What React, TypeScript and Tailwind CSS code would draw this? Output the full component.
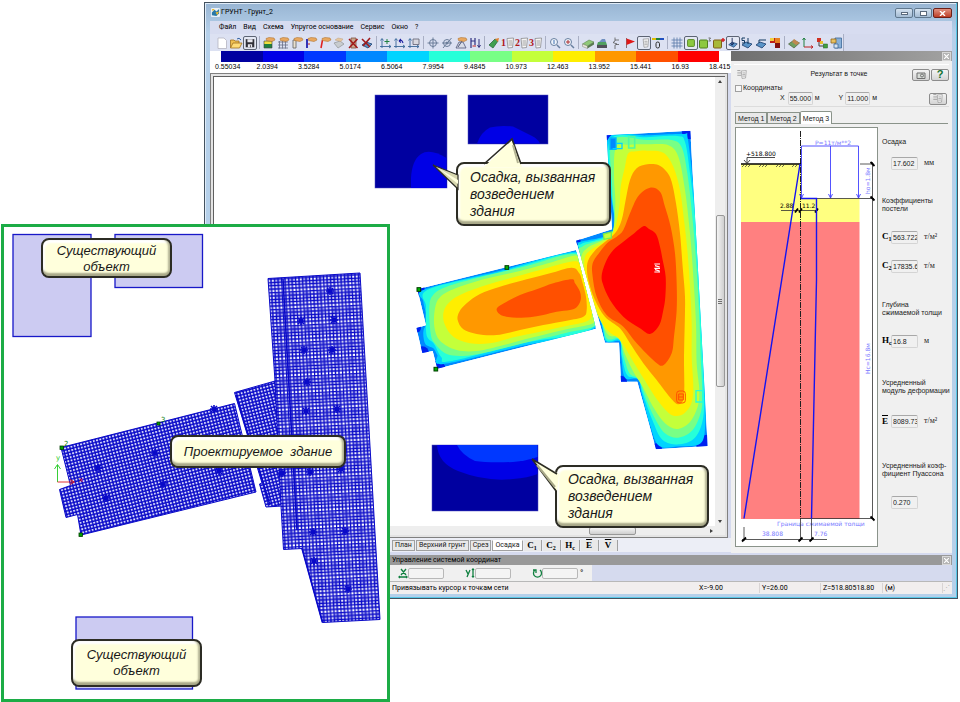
import React from 'react';
import clsx from 'clsx';

type Point = [number, number];

const parse = (src: string): Point[] =>
  src.trim().split(/\s+/).map((pair) => pair.split(',').map(Number) as Point);

// closed Catmull-Rom curve through the given points
const smooth = (src: string) => {
  const p = parse(src);
  const n = p.length;
  let d = `M${p[0][0]} ${p[0][1]}`;
  for (let i = 0; i < n; i++) {
    const a = p[(i + n - 1) % n];
    const b = p[i];
    const c = p[(i + 1) % n];
    const e = p[(i + 2) % n];
    d += `C${b[0] + (c[0] - a[0]) / 6} ${b[1] + (c[1] - a[1]) / 6} ${c[0] - (e[0] - b[0]) / 6} ${c[1] - (e[1] - b[1]) / 6} ${c[0]} ${c[1]}`;
  }
  return d + 'Z';
};

const SCALE = [
  { value: '0.55034', bar: 'bg-[#0000a0]' },
  { value: '2.0394', bar: 'bg-[#0000e6]' },
  { value: '3.5284', bar: 'bg-[#0038ff]' },
  { value: '5.0174', bar: 'bg-[#0088ff]' },
  { value: '6.5064', bar: 'bg-[#00d4ff]' },
  { value: '7.9954', bar: 'bg-[#26ffd9]' },
  { value: '9.4845', bar: 'bg-[#78ff86]' },
  { value: '10.973', bar: 'bg-[#c4ff3a]' },
  { value: '12.463', bar: 'bg-[#ffee00]' },
  { value: '13.952', bar: 'bg-[#ff9800]' },
  { value: '15.441', bar: 'bg-[#ff5000]' },
  { value: '16.93', bar: 'bg-[#ff0000]' },
];

const MENU = ['Файл', 'Вид', 'Схема', 'Упругое основание', 'Сервис', 'Окно', '?'];

/* ---------- toolbar ---------- */

const Hand = () => (
  <path d="M4 2.5 7 1.5 12 2 13 4 10 5.5 7 5 4.5 4.5Z" fill="#e8a860" stroke="#a86820" strokeWidth=".5" />
);
const Axes = () => (
  <path d="M3 3V12M1 10.5H12M1.5 4.5 3 2.5 4.5 4.5M10 9 12 10.5 10 12" fill="none" stroke="#386898" strokeWidth=".9" />
);
const Sheet = () => (
  <g fill="#f4f4f4" stroke="#808080" strokeWidth=".7">
    <path d="M6 2.5 12.5 2 11.5 11.5 7 12Z" />
    <path d="M7.500 5H11M7.500 7H11M7.500 9H11" />
  </g>
);
const Plate = () => (
  <path d="M2 9 6 6 12 8 8 12Z" fill="#5a94c8" stroke="#1c3c6c" strokeWidth=".8" />
);

const ICONS: Record<string, React.ReactNode> = {
  new: <path d="M3 2H9L11.5 4.500V12.500H3Z" fill="#fff" stroke="#b4b4c0" strokeWidth=".8" />,
  open: (
    <>
      <path d="M1.500 12V4H5L6 5H10V7" fill="#f0c050" stroke="#a07020" strokeWidth=".8" />
      <path d="M1.500 12 4 7H13L10.500 12Z" fill="#ffdc78" stroke="#a07020" strokeWidth=".8" />
      <path d="M8 3Q10 1 12 4" fill="none" stroke="#3060a0" />
    </>
  ),
  save: (
    <>
      <path d="M2 2.500H12V12H2Z" fill="#303038" />
      <path d="M4 2.500H10V6H4ZM4.500 8.500H9.500V12H4.500Z" fill="#e8e8f0" />
      <path d="M7.500 9.500V12" stroke="#303038" />
    </>
  ),
  layers: (
    <>
      <path d="M2 5H10V8H2Z" fill="#f0e040" />
      <path d="M2 8H10V12H2Z" fill="#208040" />
      <path d="M2 5H10V12H2Z" fill="none" stroke="#404040" strokeWidth=".6" />
      <Hand />
    </>
  ),
  gridHand: (
    <>
      <path d="M2 6H12M2 9H12M3.500 5V12.500M6.500 5V12.500M9.500 5V12.500M2 12H12" stroke="#686e88" strokeWidth=".8" />
      <Hand />
    </>
  ),
  pile: (
    <>
      <path d="M3 4H6V12H3Z" fill="#e8e0d0" stroke="#606060" strokeWidth=".8" />
      <Hand />
    </>
  ),
  bore: (
    <>
      <path d="M3 3V12" stroke="#2020b0" strokeWidth="1.800" />
      <path d="M5 7V9" stroke="#c02020" />
      <Hand />
    </>
  ),
  line: (
    <>
      <path d="M3 12 4.500 4" stroke="#e02020" strokeWidth="1.600" />
      <Hand />
    </>
  ),
  slab: (
    <>
      <path d="M2 7 8 5 12 8 6 12Z" fill="#c8ccd0" stroke="#989ca0" strokeWidth=".8" />
      <path d="M3 4 6 2 11 3 9 5.500Z" fill="#e4c8a0" stroke="#c0a080" strokeWidth=".5" />
    </>
  ),
  delSheet: (
    <>
      <path d="M5 2H10V12H5Z" fill="#c8a890" stroke="#805040" strokeWidth=".8" />
      <path d="M3 3 11.500 12M11.500 3 3 12" stroke="#a01818" strokeWidth="1.500" />
    </>
  ),
  delPlate: (
    <>
      <Plate />
      <path d="M2 3 10 11M10 2 3 10" stroke="#a01818" strokeWidth="1.600" />
    </>
  ),
  axMove: (
    <>
      <Axes />
      <path d="M8 3V8M5.500 5.500H10.500" stroke="#208040" />
    </>
  ),
  axTurn: (
    <>
      <Axes />
      <path d="M6 5Q9 3 10 7M6 5 8 3M6 5 8 6.500" fill="none" stroke="#2020a0" strokeWidth="1.100" />
    </>
  ),
  axSave: (
    <>
      <Axes />
      <path d="M6 3H12V8.500H6Z" fill="#d8d8e0" stroke="#606070" strokeWidth=".8" />
    </>
  ),
  target: (
    <g fill="none" stroke="#6a7c98">
      <circle cx="7" cy="7" r="3.500" />
      <path d="M7 1.500V12.500M1.500 7H12.500" />
    </g>
  ),
  targetOff: (
    <g fill="none" stroke="#6a7c98">
      <circle cx="7" cy="7" r="3.500" />
      <path d="M2 7H12M3 12 11.500 2" />
      <circle cx="7" cy="7" r="1" fill="#6a7c98" />
    </g>
  ),
  measure: (
    <>
      <path d="M2 12 5 6 9 6 12 12Z" fill="#d8dce8" stroke="#505878" strokeWidth=".8" />
      <path d="M4 11 8 5" stroke="#505878" />
      <Hand />
    </>
  ),
  loads: (
    <>
      <path d="M3 2V12M3 5H7M7 2V9" stroke="#303080" strokeWidth="1.200" />
      <path d="M11 3V11M9.500 9 11 11.500 12.500 9" fill="none" stroke="#303080" />
      <path d="M4.500 10H8" stroke="#c02020" />
    </>
  ),
  calc: (
    <>
      <path d="M2 9 8 3 11 5 6 12Z" fill="#40a050" stroke="#206030" strokeWidth=".7" />
      <path d="M8 3 12 2 11 6Z" fill="#e08030" />
    </>
  ),
  zoom: (
    <g fill="none" stroke="#6880a0">
      <circle cx="6" cy="6" r="3.500" fill="#eef4fb" />
      <path d="M9 9 12 12" strokeWidth="1.500" />
      <path d="M6 4V8" stroke="#4070b0" />
    </g>
  ),
  zoomAll: (
    <g fill="none" stroke="#6880a0">
      <circle cx="6" cy="6" r="3.500" fill="#eef4fb" />
      <path d="M9 9 12 12" strokeWidth="1.500" />
      <path d="M4 6H8M6 4V8" stroke="#b03030" />
    </g>
  ),
  block: (
    <>
      <path d="M1.500 8 8 4 13 6 6.500 10Z" fill="#90c878" stroke="#507840" strokeWidth=".5" />
      <path d="M1.500 8 6.500 10V12.500L1.500 10.500Z" fill="#e8e8d8" stroke="#808070" strokeWidth=".5" />
      <path d="M6.500 10 13 6V8.500L6.500 12.500Z" fill="#587850" />
    </>
  ),
  strata: (
    <>
      <path d="M4 6 7 3 10 3 11 6Z" fill="#7090c0" />
      <path d="M3 6H11L12 9H2Z" fill="#50a060" />
      <path d="M2 9H12V12H2Z" fill="#505058" />
    </>
  ),
  level: <path d="M6 1.500V5L4 6.500 8 8 6 9V13M6 4H10M7 8.500H10" fill="none" stroke="#585858" strokeWidth=".8" />,
  flag: (
    <>
      <path d="M3.500 2V12" stroke="#705050" strokeWidth=".8" />
      <path d="M3.500 2.500 12 5.500 3.500 9Z" fill="#e01818" />
    </>
  ),
  report: <Sheet />,
  depth: (
    <>
      <path d="M1 3H5" stroke="#e0c000" strokeWidth="2" />
      <path d="M5 3H9" stroke="#208040" strokeWidth="2" />
      <path d="M9 3H13" stroke="#2050c0" strokeWidth="2" />
      <rect x="5" y="6" width="3.500" height="6" rx="1.700" fill="none" stroke="#303030" />
    </>
  ),
  grid: <path d="M1.500 4H12.500M1.500 7H12.500M1.500 10H12.500M4 1.500V12.500M7 1.500V12.500M10 1.500V12.500" stroke="#5878a8" strokeWidth=".8" />,
  green: <rect x="3" y="3" width="8" height="8" rx="1" fill="#8cc840" stroke="#50801c" />,
  green3: (
    <>
      <rect x="1.500" y="4" width="8" height="8" rx="1" fill="#8cc840" stroke="#50801c" />
      <path d="M10.500 2H12.500L11.500 3.500 12.500 5H10.500" fill="none" stroke="#404040" strokeWidth=".7" />
    </>
  ),
  greenMark: (
    <>
      <rect x="1.500" y="4" width="8" height="8" rx="1" fill="#a8b838" stroke="#806018" />
      <path d="M9 4H13M11 2V6" stroke="#d02020" strokeWidth="1.400" />
    </>
  ),
  plateDown: (
    <>
      <Plate />
      <path d="M6 1V9M4 7 6 9.500 8 7" fill="none" stroke="#102050" />
    </>
  ),
  plateSum: (
    <>
      <Plate />
      <path d="M5 2H2V4.500H4.500V7H2M8 2V8" fill="none" stroke="#103860" />
    </>
  ),
  plateFlat: (
    <>
      <Plate />
      <path d="M5 4H12M5 4V7" stroke="#103860" />
    </>
  ),
  palette: (
    <>
      <rect x="2" y="2" width="5" height="5" fill="#c02018" />
      <rect x="7" y="2" width="5" height="5" fill="#e88020" />
      <rect x="7" y="7" width="5" height="5" fill="#801010" />
      <rect x="2" y="2" width="4" height="3" fill="#f0d040" />
    </>
  ),
  iso: (
    <>
      <path d="M1.500 8 7 4 12.500 7 7 12Z" fill="#70a060" stroke="#405030" strokeWidth=".6" />
      <path d="M5 6 7 3 12.500 7 9 9Z" fill="#c08850" />
    </>
  ),
  axes: (
    <>
      <path d="M3 2V11M1.500 4 3 2 4.500 4" fill="none" stroke="#208040" />
      <path d="M3 11H12M10 9.500 12 11 10 12.500" fill="none" stroke="#c02020" />
    </>
  ),
  nodes: (
    <>
      <rect x="2" y="2" width="4" height="4" fill="#d03020" />
      <path d="M4 6V10H9" fill="none" stroke="#404040" />
      <rect x="5" y="5" width="3" height="3" fill="#e8c030" />
      <rect x="8.500" y="8" width="4" height="4" fill="#40a040" stroke="#206020" strokeWidth=".5" />
    </>
  ),
  windows: (
    <>
      <path d="M6 2H12.500V12H6Z" fill="#88b0d8" stroke="#3c6898" strokeWidth=".8" />
      <path d="M2 3H7V7H2Z" fill="#e8c060" stroke="#906820" strokeWidth=".8" />
      <path d="M5 8H9V12H5Z" fill="#d8e4f0" stroke="#3c6898" strokeWidth=".8" />
    </>
  ),
};

type Tool = { icon: string; title: string; on?: boolean; num?: string };

const TOOLS: (Tool | null)[] = [
  { icon: 'new', title: 'Создать' },
  { icon: 'open', title: 'Открыть' },
  { icon: 'save', title: 'Сохранить', on: true },
  null,
  { icon: 'layers', title: 'Слои грунта' },
  { icon: 'gridHand', title: 'Сетка' },
  { icon: 'pile', title: 'Свая' },
  { icon: 'bore', title: 'Скважина' },
  { icon: 'line', title: 'Линия' },
  { icon: 'slab', title: 'Плита' },
  { icon: 'delSheet', title: 'Удалить слой' },
  { icon: 'delPlate', title: 'Удалить плиту' },
  null,
  { icon: 'axMove', title: 'Перенос осей' },
  { icon: 'axTurn', title: 'Поворот осей' },
  { icon: 'axSave', title: 'Сохранить оси' },
  null,
  { icon: 'target', title: 'Привязка' },
  { icon: 'targetOff', title: 'Без привязки' },
  { icon: 'measure', title: 'Измерить' },
  { icon: 'loads', title: 'Нагрузки' },
  null,
  { icon: 'calc', title: 'Расчёт' },
  { icon: 'report', title: 'Вариант 1', num: '1' },
  { icon: 'report', title: 'Вариант 2', num: '2' },
  { icon: 'report', title: 'Вариант 3', num: '3' },
  null,
  { icon: 'zoom', title: 'Лупа' },
  { icon: 'zoomAll', title: 'Показать всё' },
  null,
  { icon: 'block', title: 'Объём' },
  { icon: 'strata', title: 'Разрез' },
  { icon: 'level', title: 'Отметка' },
  { icon: 'flag', title: 'Флаг' },
  { icon: 'report', title: 'Результат в точке', on: true },
  { icon: 'depth', title: 'Глубина' },
  null,
  { icon: 'grid', title: 'Сетка на плане' },
  { icon: 'green', title: 'Площадки', on: true },
  { icon: 'green3', title: 'Номера площадок' },
  { icon: 'greenMark', title: 'Метки' },
  { icon: 'plateDown', title: 'Осадка плиты', on: true },
  { icon: 'plateSum', title: 'Сумма' },
  { icon: 'plateFlat', title: 'Плоскость' },
  { icon: 'palette', title: 'Палитра' },
  null,
  { icon: 'iso', title: 'Изометрия' },
  { icon: 'axes', title: 'Оси' },
  { icon: 'nodes', title: 'Узлы' },
  { icon: 'windows', title: 'Окна' },
];

const Toolbar = () => (
  <div className="flex h-[17px] w-fit items-center border-r border-[#a9afc4] bg-[#dce1f2] pl-[5px]">
    {TOOLS.map((tool, i) =>
      tool === null ? (
        <span key={i} className="mx-[2px] h-[13px] w-px bg-[#a9afc4]" />
      ) : (
        <button
          key={i}
          type="button"
          aria-label={tool.title}
          className={clsx(
            'relative flex h-[14px] w-[14px] shrink-0 items-center justify-center',
            tool.on && 'rounded-[2px] border border-[#5c6474] bg-[#e4e8f4]'
          )}
        >
          <svg viewBox="0 0 14 14" className={tool.on ? 'h-[12px] w-[12px] shrink-0' : 'h-[14px] w-[14px] shrink-0'}>
            {ICONS[tool.icon]}
          </svg>
          {tool.num && (
            <span className="absolute top-[2px] left-0 font-['Liberation_Serif',serif] text-[10px] leading-[10px] font-bold text-[#b01818]">
              {tool.num}
            </span>
          )}
        </button>
      )
    )}
  </div>
);

/* ---------- settlement map ---------- */

const TOWER_OUTLINE = '110,76 361,62 413,1008 258,1018 202,815 153,815 147,698 105,698 88,635 18,392 126,358';
const TOWER: [string, string][] = [
  ['#00d4ff', '116,84 230,76 340,72 353,84 370,230 386,420 398,620 405,820 406,940 392,1000 330,1009 268,1008 240,945 215,850 204,808 165,803 154,740 149,694 108,694 92,630 26,410 30,396 128,362 122,240'],
  ['#26ffd9', '122,88 230,82 322,78 345,96 360,190 376,330 388,500 395,660 401,820 400,920 376,982 330,1003 278,990 247,930 218,850 206,808 172,796 156,740 149,690 110,692 92,630 28,420 34,402 128,364 124,240'],
  ['#78ff86', '128,92 230,90 305,90 335,112 352,190 368,330 380,480 388,620 392,740 397,850 393,905 368,960 325,983 285,970 252,920 226,860 206,808 178,790 160,735 149,686 112,686 94,630 32,440 40,408 128,366 127,240'],
  ['#c4ff3a', '138,112 180,104 240,103 295,106 325,140 345,240 360,370 370,500 378,640 380,760 388,840 383,890 358,938 320,957 285,940 252,895 218,830 190,785 166,735 146,684 116,676 96,640 72,590 40,490 34,440 55,412 100,390 128,366 136,280 132,200'],
  ['#ffee00', '175,130 200,124 230,122 280,128 310,170 330,240 342,330 352,420 360,530 365,640 365,740 370,830 364,880 345,908 320,918 295,908 262,870 225,812 190,755 150,690 120,668 100,645 75,590 47,500 44,445 62,420 100,397 132,362 148,290 152,230 165,170'],
  ['#ff9800', '232,163 265,165 290,185 305,215 318,280 330,370 338,470 345,560 344,650 342,740 343,830 340,870 325,883 305,868 260,810 220,760 180,700 150,655 105,620 75,570 55,510 52,460 72,425 100,400 135,370 155,330 167,270 180,210 200,175'],
  ['#ff5000', '240,233 270,245 285,290 302,350 315,430 320,520 320,600 312,680 305,730 280,766 255,755 200,700 160,650 110,615 80,560 68,500 68,460 90,425 115,396 140,380 160,360 180,310 205,258'],
  ['#ff0000', '220,349 236,356 258,372 270,410 278,450 287,500 286,560 280,600 268,645 240,672 210,655 160,620 120,570 98,520 96,490 110,450 130,420 160,395 190,372'],
];

const WING_OUTLINE = '52,208 528,90 588,326 112,446 98,393 67,399 49,324 78,316';
const WING: [string, string][] = [
  ['#00d4ff', '75,208 300,152 527,95 549,160 588,320 360,379 130,432 112,405 100,385 76,372 70,335 82,300 70,245'],
  ['#26ffd9', '86,208 300,156 527,98 552,160 588,316 360,372 150,424 124,412 102,372 84,355 78,330 78,260'],
  ['#78ff86', '140,200 240,172 380,138 525,102 553,160 584,250 587,314 500,338 400,362 280,392 200,407 140,402 104,370 92,340 88,260 100,224'],
  ['#c4ff3a', '522,107 545,120 560,160 578,240 584,295 574,312 500,328 400,352 300,378 230,393 170,390 120,362 103,320 105,265 120,232 160,208 250,178 350,155 450,128'],
  ['#ffee00', '520,124 543,140 555,180 568,230 576,280 562,303 500,318 420,335 340,352 270,370 210,370 160,350 135,315 130,280 145,250 180,225 250,198 330,175 420,150'],
  ['#ff9800', '515,143 538,160 548,190 558,230 560,270 550,290 500,302 430,315 360,330 290,345 230,342 190,328 173,300 178,275 200,250 240,222 300,200 380,178 450,160'],
  ['#ff5000', '515,178 525,190 540,215 542,240 530,262 510,270 470,275 430,285 390,292 350,293 310,288 292,275 293,262 320,245 360,225 410,208 460,190'],
];

const SettlementMap = () => (
  <svg className="h-[449px] min-w-0 flex-1" role="img" aria-label="Изополя осадки">
    <defs>
      <clipPath id="tower-clip"><polygon points={TOWER_OUTLINE} /></clipPath>
      <clipPath id="wing-clip"><polygon points={WING_OUTLINE} /></clipPath>
    </defs>
    <g transform="translate(-214 -77)">
      <g stroke="#5050c0" strokeWidth=".5" fill="#0000a0">
        <rect x="375" y="95" width="72" height="93" />
        <rect x="468" y="95" width="80" height="49" />
        <rect x="432" y="445" width="106" height="66" />
      </g>
      <path d="M411 188V178Q412 160 421 154Q430 148 446.500 158V188Z" fill="#0000e6" />
      <path d="M477 143.500Q481 132 490 127.500Q500 125 513 126.500Q524 132 532 136Q538 139 540 143.500Z" fill="#0000e6" />
      <path d="M437 445Q438 463 458 471Q486 482 513 479Q528 478 537.500 474V445Z" fill="#0000e6" />
      <path d="M457 445Q462 455 475 461Q488 463 513 462Q526 461 537.500 457V445Z" fill="#0038ff" />

      <g transform="translate(570 110) scale(.33333)">
        <g clipPath="url(#tower-clip)">
          <polygon points={TOWER_OUTLINE} fill="#0088ff" />
          <g fill="#0020f0">
            <circle cx="361" cy="62" r="26" />
            <circle cx="413" cy="1008" r="34" />
            <circle cx="258" cy="1018" r="18" />
            <circle cx="153" cy="815" r="18" />
            <circle cx="18" cy="392" r="14" />
            <circle cx="110" cy="76" r="14" />
          </g>
          {TOWER.map(([fill, pts]) => <path key={fill} d={smooth(pts)} fill={fill} />)}
          <path d="M120 84H138V118H120Z" fill="#0088ff" stroke="#00b4ff" strokeWidth="4" />
          <path d="M138 100H156V116H128" fill="none" stroke="#00d4ff" strokeWidth="4" />
          <path d="M176 80H194V114H176Z" fill="none" stroke="#50f8a0" strokeWidth="5" />
          <path d="M100 372 124 366V384L102 388Z" fill="#c4ff3a" stroke="#78e850" strokeWidth="4" />
          <path d="M378 842H398V876H378Z" fill="none" stroke="#26ffd9" strokeWidth="4" />
          <rect x="320" y="843" width="26" height="36" rx="8" fill="none" stroke="#ff5000" strokeWidth="3" />
          <path d="M326 852H340V870H326ZM326 861H340" fill="none" stroke="#ff5000" strokeWidth="3" />
        </g>
        <path d="M253 462H270M255 467 269 471M253 475H270M255 479 269 483M253 486H270" stroke="#fff" strokeWidth="3.500" />
      </g>

      <g transform="translate(400 220) scale(.33333)">
        <g clipPath="url(#wing-clip)">
          <polygon points={WING_OUTLINE} fill="#0088ff" />
          <g fill="#0020f0">
            <circle cx="52" cy="208" r="22" />
            <circle cx="112" cy="446" r="24" />
            <circle cx="67" cy="399" r="20" />
            <circle cx="49" cy="324" r="14" />
          </g>
          {WING.map(([fill, pts]) => <path key={fill} d={smooth(pts)} fill={fill} />)}
        </g>
        <g fill="#00b400" stroke="#003c00" strokeWidth="3">
          <rect x="51" y="203" width="11" height="11" />
          <rect x="315" y="137" width="11" height="11" />
          <rect x="102" y="442" width="11" height="11" />
        </g>
      </g>
    </g>
  </svg>
);

const SHEETS = ['План', 'Верхний грунт', 'Срез', 'Осадка'];

const Coef = ({ letter, sub, over }: { letter: string; sub?: string; over?: boolean }) => (
  <span className="font-['Liberation_Serif',serif] text-[9px] leading-[9px] font-bold text-black">
    <span className={over ? 'overline' : ''}>{letter}</span>
    {sub && <span className="relative top-[2px] text-[6px]">{sub}</span>}
  </span>
);

const SheetTabs = () => (
  <div role="tablist" className="flex h-[14px] items-start gap-px bg-[#eceef6] pt-[2px] pl-[182px] text-[7px]">
    {SHEETS.map((name) => (
      <button
        key={name}
        type="button"
        role="tab"
        className={clsx(
          'h-[11px] border border-[#a0a0a0] px-[2px] leading-[9px] whitespace-nowrap',
          name === 'Осадка' ? 'border-t-white bg-white' : 'bg-[#e9e9e9]'
        )}
      >
        {name}
      </button>
    ))}
    {[['C', '1'], ['C', '2'], ['H', 'c'], ['E', ''], ['V', '']].map(([letter, sub]) => (
      <button
        key={letter + sub}
        type="button"
        role="tab"
        className="flex h-[11px] w-[18px] items-center justify-center border-r border-[#a0a0a0] bg-[#e9e9e9]"
      >
        <Coef letter={letter} sub={sub} over={!sub} />
      </button>
    ))}
  </div>
);

/* ---------- result panel ---------- */

const Arrow = ({ x }: { x: number }) => <path d={`M${x} 146V198M${x - 2} 194 ${x} 198 ${x + 2} 194`} />;

const Section = () => (
  <svg className="h-[420px] w-[143px] shrink-0 border border-[#8a938a] bg-white" role="img" aria-label="Эпюра напряжений">
    <g transform="translate(-736 -128)" className="font-['DejaVu_Sans',sans-serif] text-[6px]">
      <path d="M741 164H801V198.500H859.500V222H741Z" fill="#ffff80" />
      <rect x="741" y="222" width="118.500" height="297" fill="#ff8080" />
      <path d="M800.500 131V519" stroke="#202020" strokeDasharray="6 1 1 1" />
      <path d="M741 164H801" stroke="#000" strokeWidth="1.500" />
      <path
        d="M742 167 744 165M745 167 747 165M748 167 750 165M759 167 761 165M762 167 764 165M765 167 767 165M776 167 778 165M779 167 781 165M782 167 784 165M792 167 794 165M795 167 797 165"
        stroke="#303030"
        strokeWidth=".7"
      />
      <path d="M775 157.500H747V163M744 160 747 163.500 750 160" fill="none" stroke="#202020" strokeWidth=".8" />
      <text x="746" y="156">+518.800</text>
      <g fill="none" stroke="#4040ff" strokeWidth=".9">
        <path d="M801.500 146H858.500" />
        <Arrow x={801.5} />
        <Arrow x={830.5} />
        <Arrow x={858.5} />
      </g>
      <g fill="#7878ff">
        <text x="815" y="145">P=11т/м**2</text>
        <text transform="translate(870 194) rotate(-90)">hо=1.8м</text>
        <text transform="translate(870 374) rotate(-90)">Hc=16.8м</text>
        <text x="777" y="526">Граница сжимаемой толщи</text>
        <text x="762" y="536">38.808</text>
        <text x="814" y="536">7.76</text>
      </g>
      <g fill="none" stroke="#303030" strokeWidth=".8">
        <path d="M860 164H874M816 198.500H874M872.500 162V519M800 518.500H874" />
        <path d="M781 210.500H818M742 539.500H827M744 527V541M800.500 519V541M811.500 519V541" />
      </g>
      <path
        d="M870.500 162 874.500 166M870.500 196.500 874.500 200.500M870.500 516.500 874.500 520.500M795 212.500 798 208.500M799 212.500 802 208.500M815 212.500 818 208.500M742 541.500 746 537.500M798.500 541.500 802.500 537.500M809.500 541.500 813.500 537.500"
        stroke="#000"
        strokeWidth="1.800"
      />
      <path d="M800 164 744 518.500M801 198.500H816.500V280L811.500 518.500" fill="none" stroke="#1414f0" strokeWidth="1.400" />
      <text x="780" y="208">2.88</text>
      <text x="802" y="208">11.2</text>
    </g>
  </svg>
);

const FIELD = 'h-[13px] min-w-0 rounded-[2px] border border-[#d4d4d4] border-t-[#a8a8a8] bg-[#f0f0f0] pl-px text-[7px] text-[#202020]';

const Field = ({ label, mark, value, unit }: { label: string; mark?: React.ReactNode; value: string; unit?: string }) => (
  <label className="flex h-[14px] items-center">
    <span className="w-[9px] shrink-0">{mark}</span>
    <input className={`${FIELD} w-[27px]`} aria-label={label} defaultValue={value} />
    {unit && <span className="ml-[6px] font-['Liberation_Serif',serif] text-[8px] leading-[8px]">{unit}</span>}
  </label>
);

const Values = () => (
  <div className="flex min-w-0 flex-1 flex-col pt-[11px] leading-[8px] whitespace-nowrap">
    <p>Осадка</p>
    <div className="mt-[10px]"><Field label="Осадка" value="17.602" unit="мм" /></div>
    <p className="mt-[27px]">Коэффициенты<br />постели</p>
    <div className="mt-[17px]"><Field label="C1" mark={<Coef letter="C" sub="1" />} value="563.722" unit="т/м²" /></div>
    <div className="mt-[15px]"><Field label="C2" mark={<Coef letter="C" sub="2" />} value="17835.6" unit="т/м" /></div>
    <p className="mt-[28px]">Глубина<br />сжимаемой толщи</p>
    <div className="mt-[17px]"><Field label="Hc" mark={<Coef letter="H" sub="c" />} value="16.8" unit="м" /></div>
    <p className="mt-[31px]">Усредненный<br />модуль деформации</p>
    <div className="mt-[19px]"><Field label="E" mark={<Coef letter="E" over />} value="8089.73" unit="т/м²" /></div>
    <p className="mt-[34px]">Усредненный коэф-<br />фициент Пуассона</p>
    <div className="mt-[17px]"><Field label="Коэффициент Пуассона" value="0.270" /></div>
  </div>
);

const CloseBox = () => (
  <button type="button" aria-label="Закрыть" className="flex h-[9px] w-[9px] items-center justify-center border border-[#d8d8d8] bg-[#b4b4b4]">
    <svg viewBox="0 0 5 5" className="h-[5px] w-[5px]"><path d="M0 0 5 5M5 0 0 5" stroke="#fff" strokeWidth="1.200" /></svg>
  </button>
);

const SheetIcon = () => (
  <svg viewBox="0 0 14 14" className="h-[11px] w-[12px]"><Sheet /><path d="M1 2H5M1 5H6M1 8H6" stroke="#909090" /></svg>
);

const BUTTON = 'flex h-[12px] w-[18px] items-center justify-center rounded-[2px] border border-[#8c8c8c] bg-linear-to-b from-[#f4f4f4] to-[#d4d4d4]';

const ResultPanel = () => (
  <aside className="flex w-[221px] shrink-0 flex-col bg-[#f0f0f0] font-['Liberation_Sans',Arial,sans-serif] text-[7px]">
    <div className="flex h-[10px] items-center justify-end bg-linear-to-r from-[#6e6e6e] to-[#a2a2a2] pr-px"><CloseBox /></div>
    <div className="mx-[3px] mt-[3px] flex h-[20px] items-center border-t border-white pl-[2px]">
      <SheetIcon />
      <h2 className="flex-1 pl-[18px] text-center">Результат в точке</h2>
      <div className="flex gap-px">
        <button type="button" aria-label="Снимок" className={BUTTON}>
          <svg viewBox="0 0 12 8" className="h-[8px] w-[12px]" fill="none" stroke="#707070">
            <path d="M2 2H10V7.500H2Z" fill="#d8dcd8" /><circle cx="7" cy="4.500" r="1.500" />
          </svg>
        </button>
        <button type="button" aria-label="Справка" className={`${BUTTON} text-[11px] font-bold text-[#107030]`}>?</button>
      </div>
    </div>
    <fieldset className="mx-[3px] flex h-[23px] flex-col border-b border-[#dcdcdc]">
      <label className="flex h-[8px] items-center gap-px pl-px leading-[8px]">
        <input type="checkbox" className="h-[7px] w-[7px] appearance-none border border-[#a0a0a0] bg-[#f8f8f8]" />
        Координаты
      </label>
      <div className="flex items-center pl-[46px]">
        <label className="flex items-center gap-[3px]">X<input className={`${FIELD} w-[25px]`} defaultValue="55.000" /></label>
        <span className="ml-[2px]">м</span>
        <label className="ml-[19px] flex items-center gap-[2px]">Y<input className={`${FIELD} w-[25px]`} defaultValue="11.000" /></label>
        <span className="ml-[2px]">м</span>
        <button type="button" aria-label="Показать слои" className={`${BUTTON} mr-[2px] ml-auto`}><SheetIcon /></button>
      </div>
    </fieldset>
    <div role="tablist" className="mx-[4px] mt-[5px] flex h-[12px] items-end border-b border-[#8a938a] leading-[9px]">
      {['Метод 1', 'Метод 2', 'Метод 3'].map((name) => (
        <button
          key={name}
          type="button"
          role="tab"
          className={clsx(
            'border border-b-0 border-[#8a938a] px-[2px]',
            name === 'Метод 3' ? '-mb-px h-[13px] rounded-t-[2px] bg-white' : 'h-[11px] bg-[#e8e8e8]'
          )}
        >
          {name}
        </button>
      ))}
    </div>
    <div className="flex gap-[4px] pt-[3px] pb-[6px] pl-[4px]">
      <Section />
      <Values />
    </div>
  </aside>
);

/* ---------- project plan over the window ---------- */

const STARS = parse(
  '98,468 106,498 155,453 163,484 219,471 214,409 306,411 337,409 282,473 310,472 341,469 313,532 345,531 314,561 348,589 330,291 301,321 334,320 304,350 332,350 307,382'
);

const PlanPanel = () => (
  <section className="absolute top-[224px] left-px h-[478px] w-[389px] border-[3px] border-[#1cac46] bg-white" aria-label="План площадки">
    <svg className="h-full w-full">
      <defs>
        <pattern id="mesh-wing" width="3.300" height="3.300" patternUnits="userSpaceOnUse" patternTransform="rotate(-14.300)">
          <rect width="3.300" height="3.300" fill="#0a0ac8" />
          <rect x=".900" y=".900" width="1.800" height="1.800" fill="#e8e8ff" />
        </pattern>
        <pattern id="mesh-tower" width="14" height="17" patternUnits="userSpaceOnUse" patternTransform="rotate(-3)">
          <rect width="14" height="17" fill="#fff" />
          <path d="M0 .500H14M0 4H14M0 7.500H14M0 10.500H14M0 14H14" stroke="#0a0ac8" strokeWidth="1.500" />
          <path d="M.500 0V17M4 0V17M7.500 0V17M11 0V17" stroke="#0a0ac8" strokeWidth="1.500" />
          <path d="M7 0H14V7H7Z" fill="#2828d0" opacity=".4" />
        </pattern>
      </defs>
      <g transform="translate(-4 -227)">
        <g fill="#cccbf2" stroke="#1818c8" strokeWidth="1.300">
          <rect x="13" y="234.500" width="78" height="102" />
          <rect x="115" y="234.500" width="87.500" height="53" />
          <rect x="76" y="617" width="116.500" height="72" />
        </g>
        <g stroke="#0a0ac8">
          <path d="M61 447.500 234.500 403.500 256 492 81 535 77.500 514.500 66 517.500 59.500 489.500 70.500 485.500Z" fill="url(#mesh-wing)" />
          <path d="M234.500 392.500 275 381 282 506 266 507 259.500 484 262 483Z" fill="url(#mesh-wing)" />
          <path d="M268 278.500 360 273 380 619.500 322.500 622.500 302 548.500 283.500 549.500 281 506 275 381Z" fill="url(#mesh-tower)" />
          <path d="M283 279 297 530M302 548.500 322.500 622.500M236 395 270 505" strokeWidth="1.600" />
        </g>
        <g stroke="#0a0ac8" strokeWidth="1.600">
          {STARS.map(([x, y], i) => (
            <path key={i} d={`M${x - 4} ${y}H${x + 4}M${x} ${y - 4}V${y + 4}M${x - 3} ${y - 3}L${x + 3} ${y + 3}M${x + 3} ${y - 3}L${x - 3} ${y + 3}`} />
          ))}
        </g>
        <g fill="#00a000" stroke="#003c00" strokeWidth=".8">
          <rect x="60" y="446" width="3.500" height="3.500" />
          <rect x="157" y="422" width="3" height="3" />
          <rect x="79" y="533" width="3.500" height="3.500" />
        </g>
        <path d="M57.500 482V465M54.500 469 57.500 464.500 60.500 469" fill="none" stroke="#20c820" strokeWidth=".9" />
        <path d="M57.500 482H74M70 479.500 74.500 482 70 484.500" fill="none" stroke="#e02020" strokeWidth=".9" />
        <g className="font-['DejaVu_Sans',sans-serif] text-[7px]">
          <text x="64" y="446" fill="#108010">2</text>
          <text x="161" y="422" fill="#108010">3</text>
          <text x="56" y="460" fill="#20c820">y</text>
          <text x="79" y="482" fill="#e02020">x</text>
        </g>
      </g>
    </svg>
  </section>
);

/* ---------- callouts ---------- */

const BALLOON =
  "absolute flex rounded-[8px] border-2 border-[#2c2c24] bg-[#ffffdc] font-['Liberation_Sans',Arial,sans-serif] text-[#181818] italic shadow-[inset_0_-4px_2px_-1px_#a8a888,inset_-3px_0_2px_-1px_#b4b494,inset_2px_3px_2px_0_#ffffff]";

const Callouts = () => (
  <>
    <div className={`${BALLOON} top-[162px] left-[456px] w-[155px] pt-[5px] pb-[4px] pl-[12px] text-[14px] leading-[17px]`}>
      <p>Осадка, вызванная<br />возведением<br />здания</p>
      <svg className="absolute top-[-28px] left-[-28px] h-[60px] w-[100px]">
        <path d="M54 31 82 4 92 31Z" fill="#ffffdc" />
        <path d="M54 28 82 3 91 28" fill="none" stroke="#2c2c24" strokeWidth="1.600" />
        <path d="M83 9 88 27" stroke="#b4b494" strokeWidth="2" />
        <path d="M28 39 3 29 28 53Z" fill="#d8d8b0" stroke="#2c2c24" strokeWidth="1.200" />
        <path d="M8 32 28 44V48Z" fill="#ffffdc" />
      </svg>
    </div>
    <div className={`${BALLOON} top-[465px] left-[555px] w-[154px] pt-[4px] pb-[4px] pl-[11px] text-[14px] leading-[17px]`}>
      <p>Осадка, вызванная<br />возведением<br />здания</p>
      <svg className="absolute top-[-10px] left-[-28px] h-[40px] w-[34px]">
        <path d="M30 17 3 2 28 34Z" fill="#ffffdc" />
        <path d="M28 17 3 2 27 34" fill="none" stroke="#2c2c24" strokeWidth="1.500" />
        <path d="M8 8 26 30" stroke="#a8a888" strokeWidth="2" />
      </svg>
    </div>
    <div className={`${BALLOON} top-[238px] left-[41px] w-[131px] justify-center pt-[3px] pb-px text-center text-[13px] leading-[16px]`}>
      <p>Существующий<br />объект</p>
    </div>
    <div className={`${BALLOON} top-[435px] left-[170px] w-[176px] justify-center pt-[7px] pb-[6px] text-center text-[13px] leading-[16px]`}>
      <p>Проектируемое&nbsp; здание</p>
    </div>
    <div className={`${BALLOON} top-[639px] left-[71px] w-[131px] justify-center py-[6px] text-center text-[13px] leading-[16px]`}>
      <p>Существующий<br />объект</p>
    </div>
  </>
);

/* ---------- window ---------- */

const TitleBar = () => (
  <header className="flex h-[18px] items-center pl-px">
    <svg viewBox="0 0 10 10" className="h-[9px] w-[9px]">
      <rect width="10" height="10" rx="1" fill="#e8f0f8" />
      <path d="M1 5 4 2 6 4 9 1V6L6 9 1 8Z" fill="#2878a8" />
      <path d="M1 1H4L2 4ZM5 5 9 4 7 8Z" fill="#e8b830" />
    </svg>
    <h1 className="ml-px flex-1 text-[7px] text-black">ГРУНТ - Грунт_2</h1>
    <div className="mt-[2px] flex gap-px">
      <button type="button" aria-label="Свернуть" className="flex h-[10px] w-[18px] items-center justify-center rounded-[2px] border border-[#60788e] bg-linear-to-b from-[#d4e2f0] to-[#a4bcd4]">
        <span className="h-[3px] w-[7px] border border-[#5a6a7c] bg-white" />
      </button>
      <button type="button" aria-label="Развернуть" className="flex h-[10px] w-[18px] items-center justify-center rounded-[2px] border border-[#60788e] bg-linear-to-b from-[#d4e2f0] to-[#a4bcd4]">
        <span className="h-[5px] w-[7px] border border-[#5a6a7c] bg-white" />
      </button>
      <button type="button" aria-label="Закрыть окно" className="flex h-[10px] w-[19px] items-center justify-center rounded-[2px] border border-[#6c2018] bg-linear-to-b from-[#e09080] to-[#bc3c24]">
        <svg viewBox="0 0 7 5" className="h-[5px] w-[7px]"><path d="M1 0 6 5M6 0 1 5" stroke="#fff" strokeWidth="1.400" /></svg>
      </button>
    </div>
  </header>
);

const CoordBar = () => (
  <div className="flex h-[16px] bg-[#d5daee]">
    <div className="flex w-[382px] items-center bg-[#f0f0f0] pl-[188px] text-[#108040]">
      {[
        { id: 'X', icon: 'M3 2 8 8M8 2 3 8M1 10H9M2 9 1 10 2 11M8 9 9 10 8 11' },
        { id: 'Y', icon: 'M1 3 3 7M5 3 2 10M8 2V10M7 3 8 2 9 3M7 9 8 10 9 9' },
        { id: 'Угол', icon: 'M3 3A4 4 0 1 0 8 3M1 3H4V6' },
      ].map(({ id, icon }) => (
        <label key={id} className="mr-[21px] flex items-center">
          <svg viewBox="0 0 10 12" className="h-[12px] w-[10px]" fill="none" stroke="currentColor" strokeWidth="1.300"><path d={icon} /></svg>
          <input aria-label={id} className="h-[11px] w-[36px] rounded-[2px] border border-[#b8b8b8] bg-[#f4f4f4]" />
          {id === 'Угол' && <span className="ml-[2px] text-[9px] leading-[12px] text-black">°</span>}
        </label>
      ))}
    </div>
  </div>
);

export default function App() {
  return (
    <div className="relative min-h-screen overflow-hidden bg-white font-['Liberation_Sans',Arial,sans-serif] text-[#202020]">
      <main className="mt-[2px] mr-[2px] ml-[204px] flex flex-col border border-[#44525f] bg-linear-to-b from-[#98b5d3] to-[#b5d0ea] to-5% px-[5px] pb-[4px] font-['Roboto','Liberation_Sans',sans-serif] shadow-[inset_-1px_-1px_0_#58c8e8,inset_1px_1px_0_#e0ecf8]">
        <TitleBar />
        <nav className="flex h-[13px] items-center gap-[7px] bg-[#d7dcf0] pl-[9px] text-[7px] text-black">
          {MENU.map((item) => <button key={item} type="button">{item}</button>)}
        </nav>
        <div className="bg-[#d5daee]">
          <Toolbar />
          <div className="flex justify-between">
            <div className="flex min-w-0 flex-1 flex-col">
              <div className="h-[22px] bg-white pr-[12px] pl-[11px]">
                <div className="flex font-['Liberation_Sans',Arial,sans-serif] text-[7px] leading-[9px] text-black">
                  {SCALE.map(({ value, bar }) => (
                    <div key={value} className="w-0 flex-1">
                      <div className={`h-[11px] ${bar}`} />
                      <div className="-ml-[6px]">{value}</div>
                    </div>
                  ))}
                  <div className="w-0 pt-[11px]"><div className="-ml-[10px]">18.415</div></div>
                </div>
              </div>
              <div className="mr-[3px] border border-[#808080] bg-[#e4e4e4] p-[2px]">
                <div className="border-t border-l border-[#606060] bg-white">
                  <div className="flex">
                    <SettlementMap />
                    <div className="flex w-[10px] flex-col items-center bg-[#eeeeee] py-[3px]">
                      <svg viewBox="0 0 4 3" className="h-[3px] w-[4px]"><path d="M0 3 2 0 4 3Z" fill="#404040" /></svg>
                      <div className="mt-[132px] flex h-[172px] w-[9px] items-center justify-center rounded-[2px] border border-[#989898] bg-linear-to-r from-[#f4f4f4] to-[#cfcfcf]">
                        <span className="flex h-[5px] w-[4px] items-center border-y border-[#707070]"><span className="h-px w-full bg-[#707070]" /></span>
                      </div>
                      <svg viewBox="0 0 4 3" className="mt-auto h-[3px] w-[4px]"><path d="M0 0 2 3 4 0Z" fill="#404040" /></svg>
                    </div>
                  </div>
                  <div className="flex h-[9px] items-center justify-end bg-[#eeeeee] pr-[12px]">
                    <div className="mr-[74px] h-[8px] w-[47px] rounded-[2px] border border-[#989898] bg-linear-to-b from-[#f4f4f4] to-[#cfcfcf]" />
                    <svg viewBox="0 0 3 4" className="h-[4px] w-[3px]"><path d="M0 0 3 2 0 4Z" fill="#404040" /></svg>
                  </div>
                </div>
              </div>
              <SheetTabs />
            </div>
            <ResultPanel />
          </div>
          <div className="mt-[2px] flex h-[10px] items-center justify-between bg-[#999999] pr-px pl-[182px]">
            <h2 className="text-[7px] leading-[10px] text-black">Управление системой координат</h2>
            <CloseBox />
          </div>
          <CoordBar />
        </div>
        <footer className="flex h-[13px] items-center border-t border-[#b8b8b8] bg-[#f1eeee] pl-[182px] text-[7px] text-black">
          <span className="flex-1">Привязывать курсор к точкам сети</span>
          <span className="w-[60px]">X=-9.00</span>
          <span className="w-[61px] border-l border-[#d8d4d4] pl-[2px]">Y=26.00</span>
          <span className="w-[62px] border-l border-[#d8d4d4] pl-[2px]">Z=518.80518.80</span>
          <span className="w-[60px] border-l border-[#d8d4d4] pl-[2px]">(м)</span>
          <span className="w-[10px] border-l border-[#d8d4d4] text-[#b0b0b0]">⋰</span>
        </footer>
      </main>
      <PlanPanel />
      <Callouts />
    </div>
  );
}
